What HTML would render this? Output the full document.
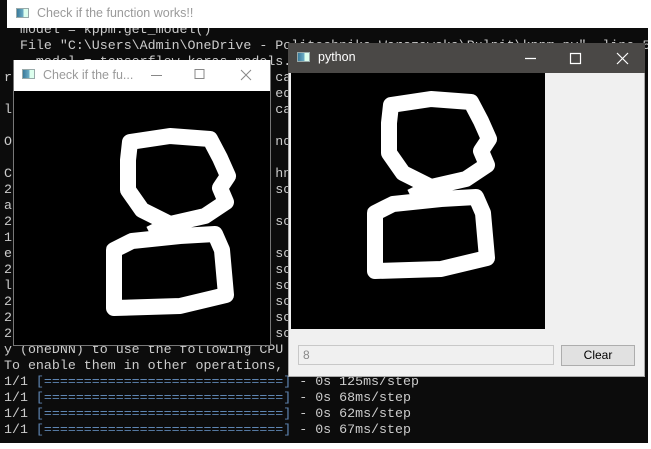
<!DOCTYPE html>
<html><head><meta charset="utf-8"><style>
*{margin:0;padding:0;box-sizing:border-box}
body{width:651px;height:449px;background:#fff;position:relative;overflow:hidden;font-family:"Liberation Sans",sans-serif}
#con{position:absolute;left:0;top:0;width:648px;height:443px;background:#0c0c0c;overflow:hidden}
#con pre{position:absolute;left:4px;top:22px;font-family:"Liberation Mono",monospace;font-size:13.3px;line-height:16px;color:#cccccc;white-space:pre}
.b{color:#5f86b3}
.t{position:absolute;font-size:12px;color:#9a9a9a}
.ico{position:absolute;width:13px;height:10px;border:1px solid #9aa;background:linear-gradient(90deg,#3a7a9a 0,#6fb0c8 60%,#dfe 60%)}
.win{position:absolute}
</style></head><body>
<div id="con"><pre>  model = kppm.get_model()
  File "C:\Users\Admin\OneDrive - Politechnika Warszawska\Pulpit\kppm.py", line 5
    model = tensorflow.keras.models.load_model('model.h5')
r                                 cal                                          k
                                  ed_
l                                 cal                                          k

O                                 nd

C                                 hni                                          p
2                                 son                                          a
a
2                                 son
1
e                                 son                                          a
2                                 son
l                                 son                                          ]
2                                 son                                          c
2                                 son                                          c
2                                 son
y (oneDNN) to use the following CPU instructions in performance-critical oper
To enable them in other operations, rebuild TensorFlow with the appropriate i
1/1 <span class="b">[==============================]</span> - 0s 125ms/step
1/1 <span class="b">[==============================]</span> - 0s 68ms/step
1/1 <span class="b">[==============================]</span> - 0s 62ms/step
1/1 <span class="b">[==============================]</span> - 0s 67ms/step</pre></div>

<div class="win" style="left:7px;top:0;width:644px;height:28px;background:#fff"></div>
<div class="ico" style="left:16px;top:8px"></div>
<div class="t" style="left:37px;top:6px;font-size:12.5px">Check if the function works!!</div>

<div class="win" style="left:13px;top:60px;width:258px;height:286px;background:#000;border:1px solid #777"></div>
<div class="win" style="left:14px;top:60px;width:256px;height:31px;background:#fff"></div>
<div class="ico" style="left:22px;top:69px"></div>
<div class="t" style="left:43px;top:68px;font-size:12.5px">Check if the fu...</div>
<svg class="win" style="left:14px;top:60px" width="256" height="31">
<path d="M137 15.5h11M181 9.5h9v9h-9zM227 10l10 10M237 10l-10 10" stroke="#888" stroke-width="1" fill="none"/></svg>
<svg class="win" style="left:14px;top:91px" width="256" height="254">
<g transform="translate(16,19)"><path d="M100 32 L140 26 L180 29 L190 48 L198 66 L190 78 L196 92 L175 106 L140 114 L112 100 L98 80 L98 50 Z M140 114 L120 124 M84 198 L84 140 L102 131 L150 126 L185 124 L192 140 L196 185 L150 196 Z" stroke="#fff" stroke-width="16" fill="none" stroke-linejoin="round"/></g></svg>

<div class="win" style="left:288px;top:43px;width:357px;height:334px;background:#f0f0f0;border:1px solid #aaa"></div>
<div class="win" style="left:288px;top:43px;width:357px;height:30px;background:#4a4846"></div>
<div class="ico" style="left:297px;top:52px"></div>
<div class="t" style="left:318px;top:50px;color:#fff;font-size:12.5px">python</div>
<svg class="win" style="left:288px;top:43px" width="357" height="30">
<path d="M237 15.5h11M282.5 10.5h10v10h-10zM329 10l11 11M340 10l-11 11" stroke="#fff" stroke-width="1.2" fill="none"/></svg>
<svg class="win" style="left:291px;top:73px" width="254" height="256">
<rect width="254" height="256" fill="#000"/>
<path d="M100 32 L140 26 L180 29 L190 48 L198 66 L190 78 L196 92 L175 106 L140 114 L112 100 L98 80 L98 50 Z M140 114 L120 124 M84 198 L84 140 L102 131 L150 126 L185 124 L192 140 L196 185 L150 196 Z" stroke="#fff" stroke-width="16" fill="none" stroke-linejoin="round"/></svg>
<div class="win" style="left:298px;top:345px;width:256px;height:20px;border:1px solid #c8c8c8;background:#f0f0f0;font-size:12px;color:#888;padding:2px 4px">8</div>
<div class="win" style="left:561px;top:345px;width:74px;height:21px;border:1px solid #adadad;background:#e1e1e1;font-size:12px;color:#000;text-align:center;line-height:19px">Clear</div>
</body></html>
